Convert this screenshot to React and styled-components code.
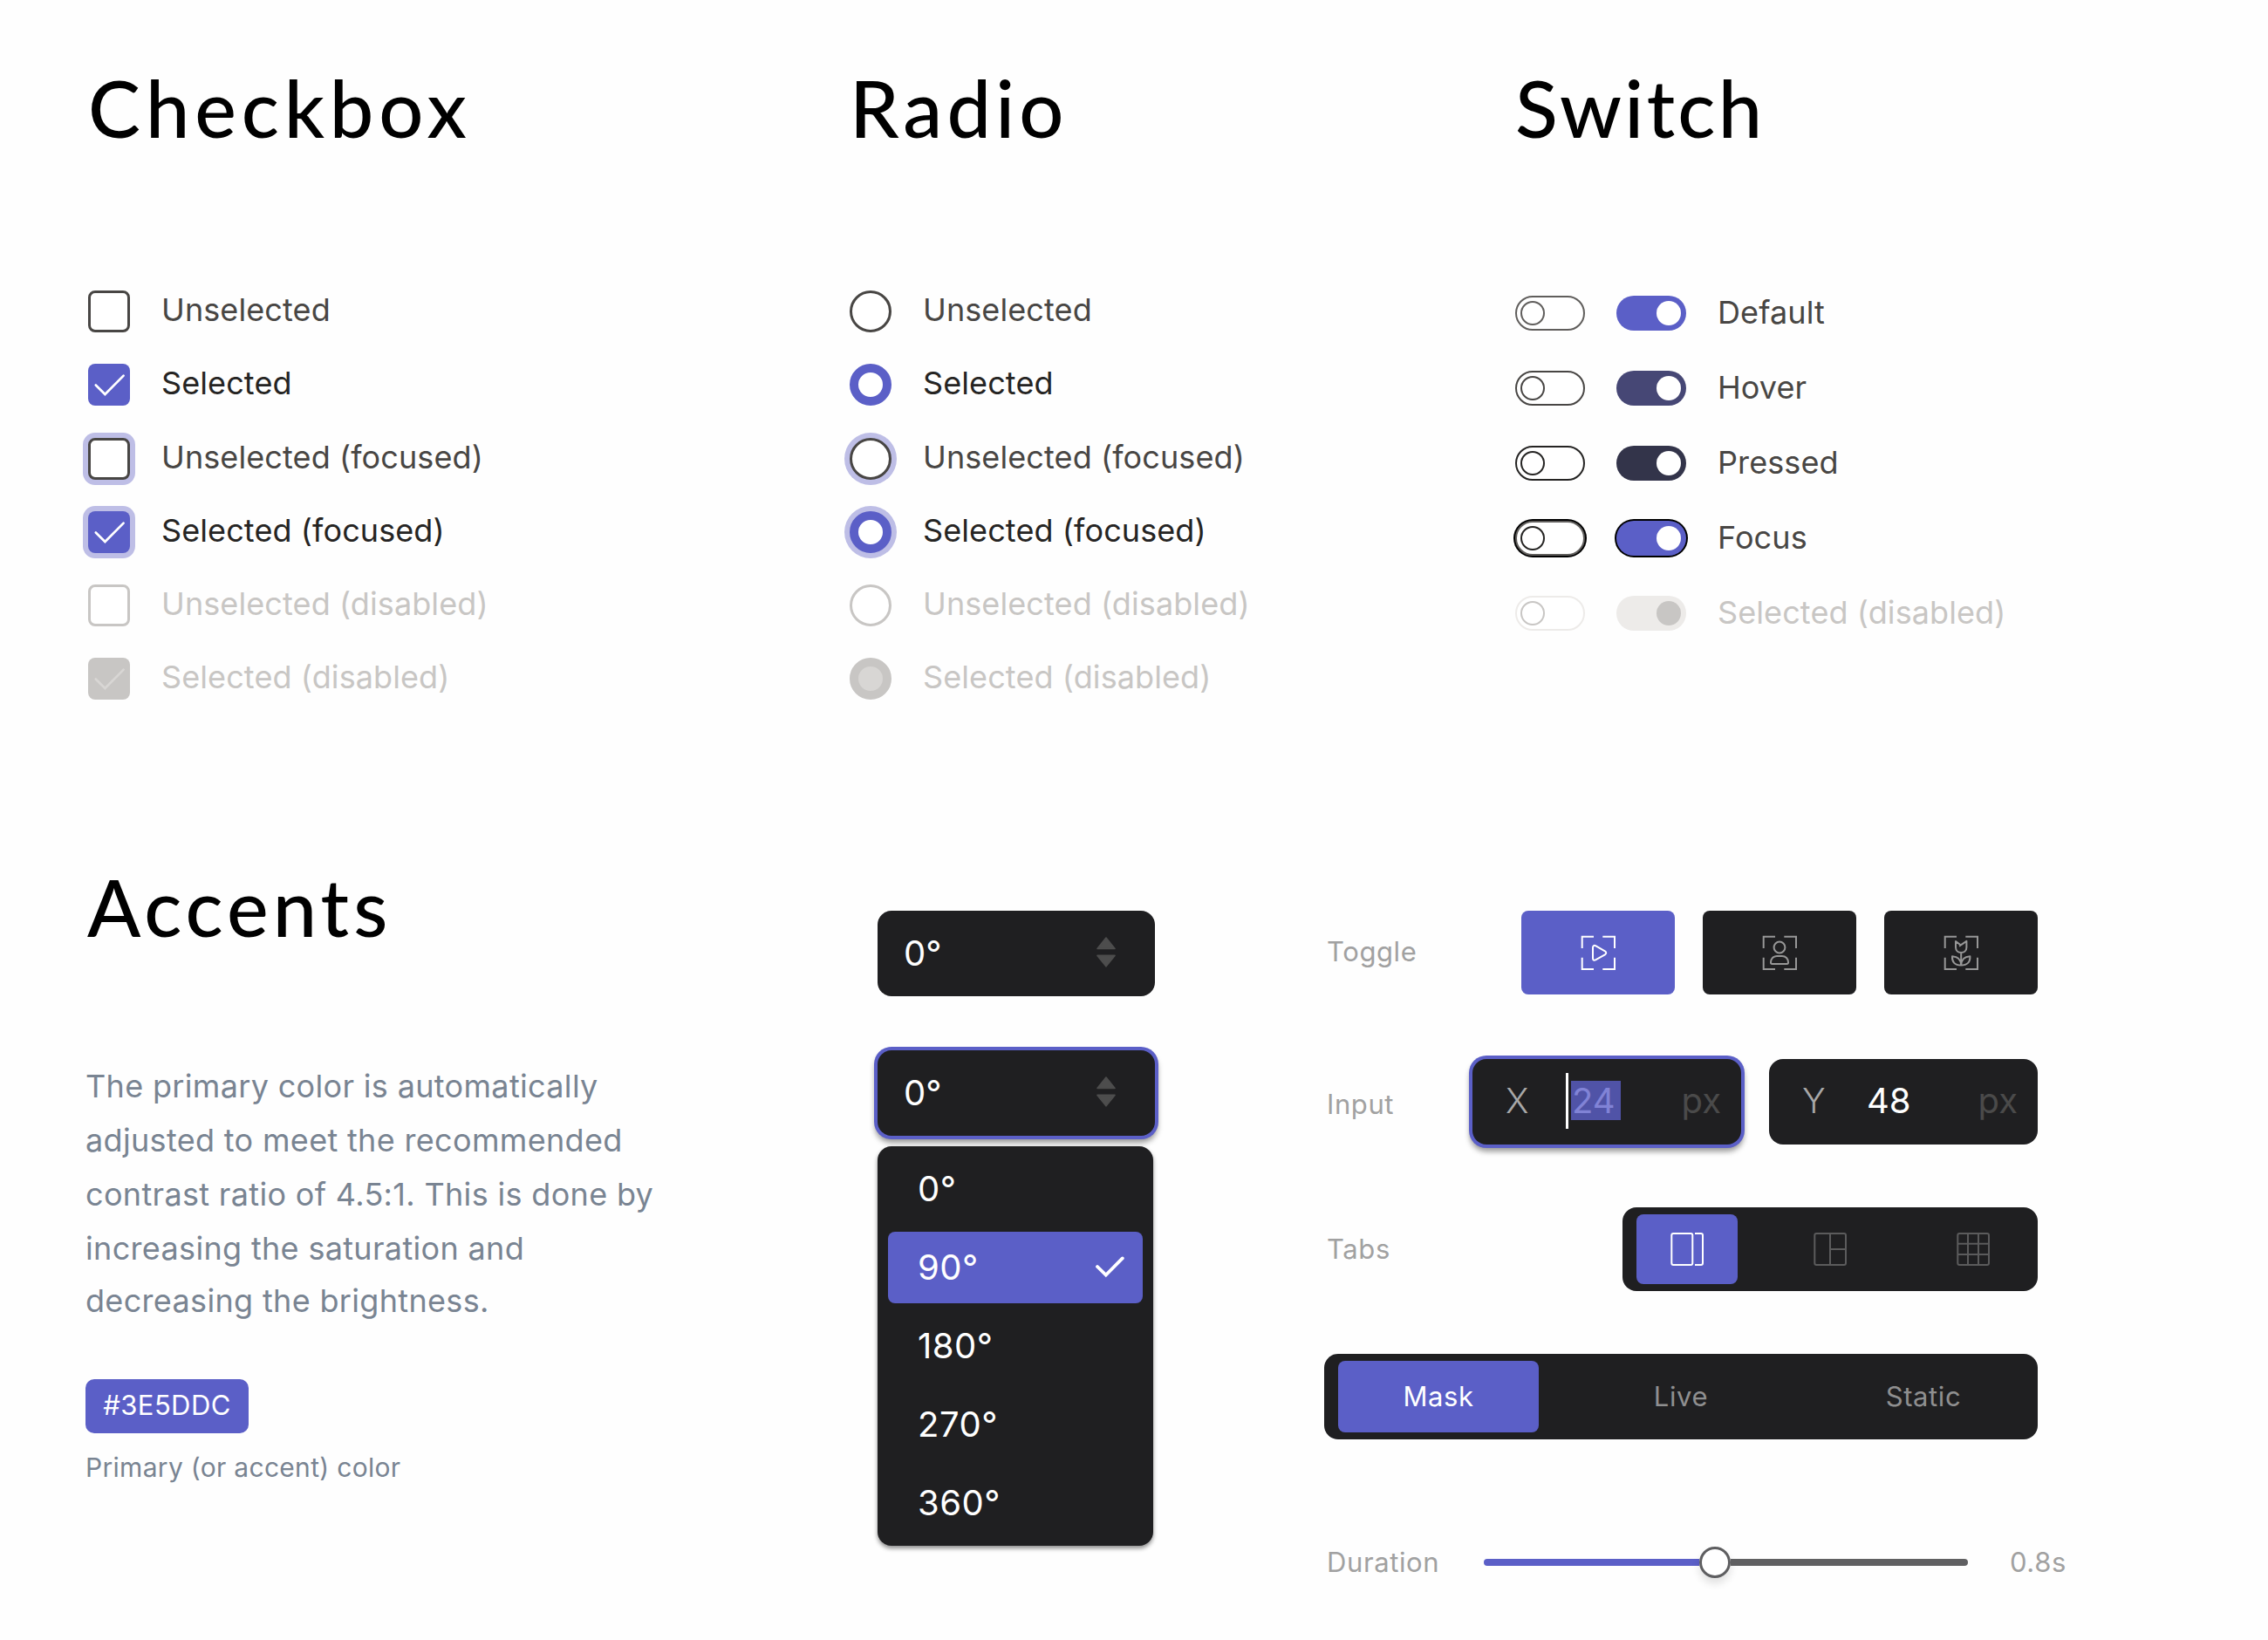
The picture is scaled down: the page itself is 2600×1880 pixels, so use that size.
import React from "react";
import styled, { createGlobalStyle, css } from "styled-components";

const ACCENT = "#5b5fc7";
const DARK = "#1f1f21";

const GlobalStyle = createGlobalStyle`
  * { box-sizing: border-box; }
  body {
    margin: 0;
    background: #fefefe;
    font-family: Inter, "Liberation Sans", sans-serif;
  }
`;

const Page = styled.main`
  width: 2600px;
  height: 1880px;
  padding-top: 68px;
  overflow: hidden;
`;

const TopRow = styled.div`
  display: grid;
  grid-template-columns: 873px 763px 1fr;
  height: 916px;
  padding-left: 101px;
`;

const BottomRow = styled.div`
  display: grid;
  grid-template-columns: 908px 512px 860px;
  align-items: start;
  padding-left: 98px;
`;

const Heading = styled.h2`
  margin: 0 0 0 ${(p) => p.$indent || 0}px;
  font-family: Lato, "Open Sans", sans-serif;
  font-size: 90px;
  font-weight: 500;
  line-height: 110px;
  letter-spacing: ${(p) => p.$tracking}px;
  color: #000;
`;

const List = styled.div`
  display: flex;
  flex-direction: column;
  gap: ${(p) => p.$gap}px;
  margin-top: ${(p) => p.$top}px;
`;

const OptionRow = styled.div`
  display: flex;
  align-items: flex-start;
  gap: 36px;
  height: ${(p) => p.$height || 48}px;
`;

const tone = { idle: "#484644", selected: "#252423", disabled: "#c8c6c4" };

const OptionLabel = styled.span`
  font-size: 36px;
  line-height: ${(p) => p.$line || 44}px;
  letter-spacing: 0.1px;
  white-space: nowrap;
  color: ${(p) => tone[p.$tone]};
`;

const focusRing = css`
  box-shadow: 0 0 0 6px #bebee6;
`;

const CheckBox = styled.span`
  display: flex;
  flex: none;
  width: 48px;
  height: 48px;
  border-radius: 8px;
  background: ${(p) => (p.$on ? (p.$tone === "disabled" ? "#c8c6c4" : ACCENT) : "#fff")};
  ${(p) => !p.$on && css`border: 3px solid ${tone[p.$tone]};`}
  ${(p) => p.$focus && focusRing}
`;

const RadioDot = styled.span`
  flex: none;
  width: 48px;
  height: 48px;
  border-radius: 50%;
  background: ${(p) => (p.$on && p.$tone === "disabled" ? "#d8d6d4" : "#fff")};
  border: ${(p) =>
    p.$on
      ? `10px solid ${p.$tone === "disabled" ? "#c8c6c4" : ACCENT}`
      : `3px solid ${tone[p.$tone]}`};
  ${(p) => p.$focus && focusRing}
`;

const Track = styled.span`
  display: flex;
  flex: none;
  align-items: center;
  justify-content: ${(p) => (p.$on ? "flex-end" : "flex-start")};
  width: 80px;
  height: 40px;
  padding: 0 ${(p) => (p.$on ? 6 : 4)}px;
  border-radius: 20px;
  background: ${(p) => (p.$on ? p.$color : "#fff")};
  ${(p) => !p.$on && css`border: 2px solid ${p.$color};`}
  ${(p) => p.$focus && css`box-shadow: 0 0 0 2px #000;`}
`;

const Knob = styled.span`
  width: 28px;
  height: 28px;
  border-radius: 50%;
  background: ${(p) => p.$fill || "#fff"};
  ${(p) => p.$line && css`border: 2px solid ${p.$line};`}
`;

const Paragraph = styled.p`
  margin: 120px 0 0;
  font-size: 36px;
  letter-spacing: 0.33px;
  color: #798492;
  white-space: nowrap;
`;

const Line = styled.span`
  display: block;
  line-height: ${(p) => (p.$last ? 58 : 62)}px;
`;

const Swatch = styled.div`
  display: flex;
  align-items: center;
  justify-content: center;
  width: 187px;
  height: 62px;
  margin-top: 61px;
  padding-bottom: 3px;
  border-radius: 10px;
  background: ${ACCENT};
  color: #fff;
  font-size: 31px;
  letter-spacing: 0.4px;
`;

const Caption = styled.div`
  margin-top: 21px;
  font-size: 30px;
  line-height: 36px;
  letter-spacing: 0.3px;
  color: #798492;
`;

const SelectColumn = styled.div`
  display: flex;
  flex-direction: column;
  padding-top: 60px;
`;

const raised = css`
  box-shadow: 0 0 0 4px ${ACCENT}, 0 5px 6px 3px rgba(0, 0, 0, 0.4);
`;

const SelectBox = styled.div`
  display: flex;
  align-items: center;
  justify-content: space-between;
  width: 318px;
  height: 98px;
  margin-bottom: ${(p) => (p.$focus ? 12 : 62)}px;
  padding: 0 45px 2px 30px;
  border-radius: 16px;
  background: ${DARK};
  color: #fff;
  font-size: 40px;
  ${(p) => p.$focus && raised}
`;

const Menu = styled.div`
  display: flex;
  flex-direction: column;
  gap: 8px;
  width: 316px;
  padding: 8px 12px;
  border-radius: 16px;
  background: ${DARK};
  box-shadow: 0 3px 5px rgba(0, 0, 0, 0.45);
`;

const MenuItem = styled.div`
  display: flex;
  align-items: center;
  justify-content: space-between;
  height: 82px;
  padding: 0 21px 2px 34px;
  border-radius: 8px;
  background: ${(p) => (p.$active ? ACCENT : "transparent")};
  color: #fff;
  font-size: 40px;
  letter-spacing: 0.5px;
`;

const Panel = styled.div`
  display: flex;
  flex-direction: column;
  width: 860px;
  padding-top: 60px;
`;

const FieldRow = styled.div`
  display: flex;
  align-items: center;
  justify-content: space-between;
  width: 818px;
  height: ${(p) => p.$height}px;
  margin-bottom: ${(p) => p.$after}px;
`;

const FieldLabel = styled.span`
  padding: ${(p) => p.$drop || 0}px 0 ${(p) => p.$lift || 0}px 3px;
  font-size: 31px;
  line-height: 38px;
  letter-spacing: 0.6px;
  color: #a1a1a1;
`;

const Group = styled.div`
  display: flex;
  gap: 32px;
`;

const ToggleButton = styled.div`
  display: flex;
  align-items: center;
  justify-content: center;
  width: 176px;
  height: 96px;
  border-radius: 8px;
  background: ${(p) => (p.$active ? ACCENT : DARK)};
  color: ${(p) => (p.$active ? "#fff" : "#979797")};
`;

const InputBox = styled.div`
  display: grid;
  grid-template-columns: 68px 1fr auto;
  align-items: center;
  width: 308px;
  height: 98px;
  padding: 0 23px 3px 38px;
  border-radius: 16px;
  background: ${DARK};
  color: #fff;
  font-size: 40px;
  ${(p) => p.$focus && raised}
`;

const Axis = styled.span`
  font-weight: 300;
  color: #a8a8a8;
`;

const Unit = styled.span`
  color: #4a4a4a;
`;

const Value = styled.span`
  display: flex;
  align-items: center;
  padding-left: ${(p) => (p.$editing ? 1 : 6)}px;
`;

const Caret = styled.span`
  width: 3px;
  height: 64px;
  margin-right: 3px;
  background: #fff;
`;

const Selection = styled.span`
  width: 57px;
  height: 45px;
  padding-left: 1px;
  line-height: 45px;
  background: #5053a7;
  color: #8183d6;
`;

const TabBar = styled.div`
  display: flex;
  align-items: center;
  gap: 48px;
  height: ${(p) => p.$height}px;
  padding: 0 16px;
  border-radius: 16px;
  background: ${DARK};
`;

const Tab = styled.div`
  display: flex;
  align-items: center;
  justify-content: center;
  width: ${(p) => p.$width}px;
  height: ${(p) => p.$height}px;
  padding-bottom: ${(p) => p.$lift || 0}px;
  border-radius: 8px;
  background: ${(p) => (p.$active ? ACCENT : "transparent")};
  color: ${(p) => (p.$active ? "#fff" : p.$idle)};
  font-size: 31px;
  letter-spacing: 0.6px;
`;

const DurationRow = styled.div`
  display: flex;
  align-items: center;
  width: 860px;
  height: 36px;
  margin-top: 51px;
`;

const DurationLabel = styled(FieldLabel)`
  width: 183px;
`;

const Slider = styled.div`
  display: flex;
  align-items: center;
  width: 555px;
`;

const Rail = styled.span`
  width: ${(p) => p.$width}px;
  height: 8px;
  border-radius: ${(p) => (p.$filled ? "4px 0 0 4px" : "0 4px 4px 0")};
  background: ${(p) => (p.$filled ? ACCENT : "#606062")};
`;

const Thumb = styled.span`
  width: 36px;
  height: 36px;
  border: 3px solid #5e5e60;
  border-radius: 50%;
  background: #fff;
  box-shadow: 0 6px 10px rgba(0, 0, 0, 0.12);
`;

const DurationValue = styled(FieldLabel)`
  padding-left: 48px;
`;

const Icon = ({ size = 40, stroke = 2, children }) => (
  <svg
    width={size}
    height={size}
    viewBox={`0 0 ${size} ${size}`}
    fill="none"
    stroke="currentColor"
    strokeWidth={stroke}
    strokeLinecap="butt"
    strokeLinejoin="round"
  >
    {children}
  </svg>
);

const CheckMark = ({ color }) => (
  <svg width="48" height="48" viewBox="0 0 48 48" fill="none" stroke={color} strokeWidth="2.7" strokeLinecap="round">
    <path d="M8.8 24.5 19.4 35 40.6 13.6" />
  </svg>
);

const MenuCheck = () => (
  <svg width="36" height="28" viewBox="0 0 36 28" fill="none" stroke="currentColor" strokeWidth="3.8" strokeLinecap="round">
    <path d="M5 14 14.8 23.6 33.8 4.4" />
  </svg>
);

const Arrows = () => (
  <svg width="22" height="36" viewBox="0 0 22 36" fill="#4d4d4d" stroke="#4d4d4d" strokeWidth="1.6" strokeLinejoin="round">
    <path d="M11 1 21 13.4H1zM11 33.8 1 21.4H21z" />
  </svg>
);

const Frame = () => (
  <path d="M1.7 15V1.7H15M25.3 1.7H39V15M39 25.7V39H25.3M15 39H1.7V25.7" strokeLinejoin="miter" />
);

const PlayIcon = () => (
  <Icon>
    <Frame />
    <path d="M14 14.2c0-2.3 1.6-2.8 3.1-2L27.9 18.4c1.8 1 1.8 2.9 0 3.9L17.1 28.4c-1.5.8-3.1.3-3.1-2z" />
  </Icon>
);

const PersonIcon = () => (
  <Icon>
    <Frame />
    <circle cx="20" cy="14" r="6.4" />
    <path d="M10 31.3C10 27 13 24 17 24H23C27 24 30 27 30 31.3 30 32.5 29.5 33 28.5 33H11.5C10.5 33 10 32.5 10 31.3z" />
  </Icon>
);

const FlowerIcon = () => (
  <Icon>
    <Frame />
    <path d="M18 12.6 26.4 6.9V14C26.4 18 23.5 20 20.2 20S14 18 14 14V7.1L19.3 11M20.2 20V34.5M20 34.5C13 34.5 9.6 31 10 24.2 16.5 24.5 20 28 20.2 34.5 20.4 28 24 24.5 30.4 24.2 30.8 31 27.2 34.5 20 34.5" />
  </Icon>
);

const CarouselIcon = () => (
  <Icon>
    <rect x="2.3" y="2" width="24" height="36" rx="2" />
    <path d="M29 2H36Q38 2 38 4V36Q38 38 36 38H29" />
  </Icon>
);

const LayoutIcon = () => (
  <Icon>
    <rect x="2.3" y="2" width="35.7" height="36" rx="2" />
    <path d="M20 2V38M20 20H38" />
  </Icon>
);

const GridIcon = () => (
  <Icon>
    <rect x="2.3" y="2" width="35.7" height="36" rx="2" />
    <path d="M14 2V38M26 2V38M2.3 13.7H38M2.3 26H38" />
  </Icon>
);

const options = [
  { text: "Unselected", tone: "idle" },
  { text: "Selected", tone: "selected", on: true },
  { text: "Unselected (focused)", tone: "idle", focus: true },
  { text: "Selected (focused)", tone: "selected", on: true, focus: true },
  { text: "Unselected (disabled)", tone: "disabled" },
  { text: "Selected (disabled)", tone: "disabled", on: true },
];

const switches = [
  { text: "Default", line: "#605e5c", knob: "#605e5c", fill: ACCENT },
  { text: "Hover", line: "#484644", knob: "#484644", fill: "#464775" },
  { text: "Pressed", line: "#252423", knob: "#252423", fill: "#33344a" },
  { text: "Focus", line: "#605e5c", knob: "#252423", fill: ACCENT, focus: true },
  { text: "Selected (disabled)", line: "#edebe9", knob: "#c8c6c4", fill: "#edebe9", thumb: "#c8c6c4", disabled: true },
];

const angles = ["0°", "90°", "180°", "270°", "360°"];

const paragraph = [
  "The primary color is automatically",
  "adjusted to meet the recommended",
  "contrast ratio of 4.5:1. This is done by",
  "increasing the saturation and",
  "decreasing the brightness.",
];

export default function App() {
  return (
    <>
      <GlobalStyle />
      <Page>
        <TopRow>
          <section>
            <Heading $tracking={5.9}>Checkbox</Heading>
            <List $gap={36.1} $top={155.4}>
              {options.map((o) => (
                <OptionRow key={o.text}>
                  <CheckBox $on={o.on} $tone={o.tone} $focus={o.focus}>
                    {o.on && <CheckMark color={o.tone === "disabled" ? "#d8d6d4" : "#fff"} />}
                  </CheckBox>
                  <OptionLabel $tone={o.tone}>{o.text}</OptionLabel>
                </OptionRow>
              ))}
            </List>
          </section>
          <section>
            <Heading $tracking={5.2}>Radio</Heading>
            <List $gap={36.1} $top={155.4}>
              {options.map((o) => (
                <OptionRow key={o.text}>
                  <RadioDot $on={o.on} $tone={o.tone} $focus={o.focus} />
                  <OptionLabel $tone={o.tone}>{o.text}</OptionLabel>
                </OptionRow>
              ))}
            </List>
          </section>
          <section>
            <Heading $tracking={3.4}>Switch</Heading>
            <List $gap={46} $top={161}>
              {switches.map((s) => (
                <OptionRow key={s.text} $height={40}>
                  <Track $color={s.line} $focus={s.focus}>
                    <Knob $line={s.knob} />
                  </Track>
                  <Track $on $color={s.fill} $focus={s.focus}>
                    <Knob $fill={s.thumb} />
                  </Track>
                  <OptionLabel $line={39} $tone={s.disabled ? "disabled" : "idle"}>
                    {s.text}
                  </OptionLabel>
                </OptionRow>
              ))}
            </List>
          </section>
        </TopRow>

        <BottomRow>
          <section>
            <Heading $tracking={5.1} $indent={2}>Accents</Heading>
            <Paragraph>
              {paragraph.map((line, i) => (
                <Line key={line} $last={i === paragraph.length - 1}>{line}</Line>
              ))}
            </Paragraph>
            <Swatch>#3E5DDC</Swatch>
            <Caption>Primary (or accent) color</Caption>
          </section>

          <SelectColumn>
            <SelectBox>0°<Arrows /></SelectBox>
            <SelectBox $focus>0°<Arrows /></SelectBox>
            <Menu>
              {angles.map((a) => (
                <MenuItem key={a} $active={a === "90°"}>
                  {a}
                  {a === "90°" && <MenuCheck />}
                </MenuItem>
              ))}
            </Menu>
          </SelectColumn>

          <Panel>
            <FieldRow $height={96} $after={74}>
              <FieldLabel $lift={3}>Toggle</FieldLabel>
              <Group>
                <ToggleButton $active><PlayIcon /></ToggleButton>
                <ToggleButton><PersonIcon /></ToggleButton>
                <ToggleButton><FlowerIcon /></ToggleButton>
              </Group>
            </FieldRow>
            <FieldRow $height={98} $after={72}>
              <FieldLabel $drop={6}>Input</FieldLabel>
              <Group>
                <InputBox $focus>
                  <Axis>X</Axis>
                  <Value $editing><Caret /><Selection>24</Selection></Value>
                  <Unit>px</Unit>
                </InputBox>
                <InputBox>
                  <Axis>Y</Axis>
                  <Value>48</Value>
                  <Unit>px</Unit>
                </InputBox>
              </Group>
            </FieldRow>
            <FieldRow $height={96} $after={72}>
              <FieldLabel>Tabs</FieldLabel>
              <TabBar $height={96}>
                <Tab $width={116} $height={80} $active><CarouselIcon /></Tab>
                <Tab $width={116} $height={80} $idle="#5b5b5c"><LayoutIcon /></Tab>
                <Tab $width={116} $height={80} $idle="#5b5b5c"><GridIcon /></Tab>
              </TabBar>
            </FieldRow>
            <FieldRow $height={98} $after={72}>
              <TabBar $height={98}>
                <Tab $width={230} $height={82} $lift={2} $active>Mask</Tab>
                <Tab $width={230} $height={82} $lift={2} $idle="#8f8f90">Live</Tab>
                <Tab $width={230} $height={82} $lift={2} $idle="#8f8f90">Static</Tab>
              </TabBar>
            </FieldRow>
            <DurationRow>
              <DurationLabel>Duration</DurationLabel>
              <Slider>
                <Rail $filled $width={247} />
                <Thumb />
                <Rail $width={272} />
              </Slider>
              <DurationValue>0.8s</DurationValue>
            </DurationRow>
          </Panel>
        </BottomRow>
      </Page>
    </>
  );
}
